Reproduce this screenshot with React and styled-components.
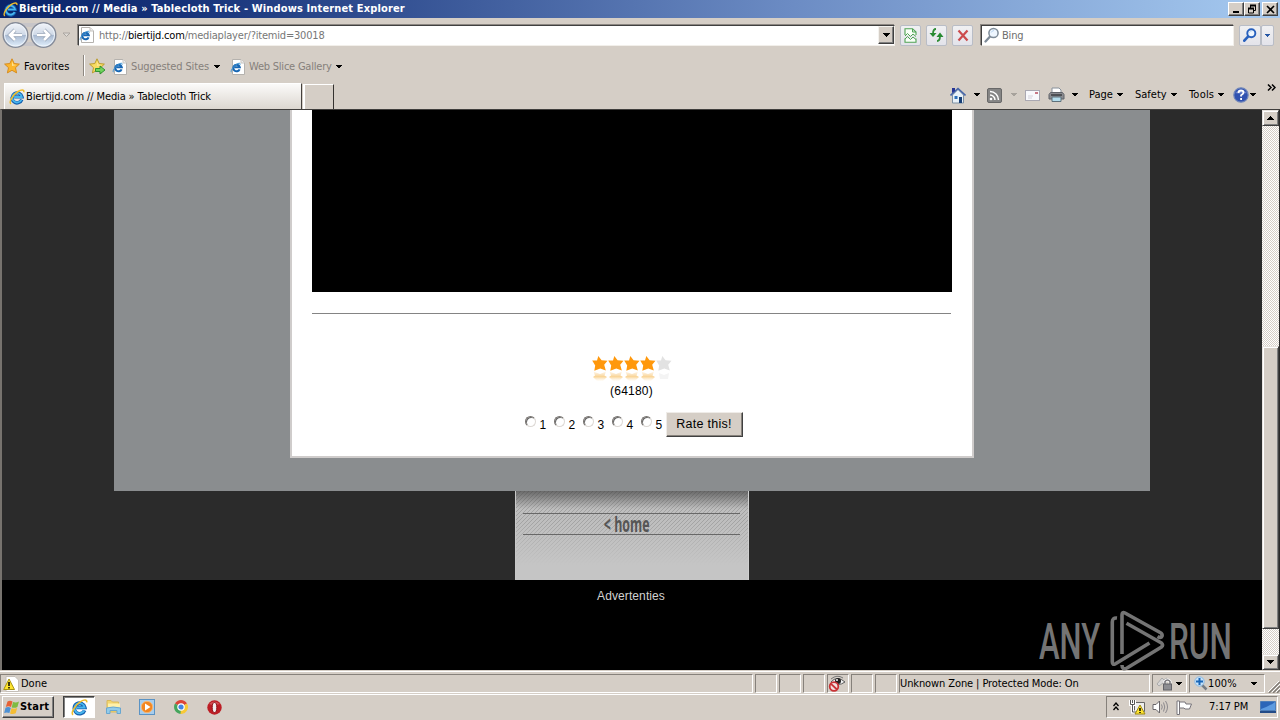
import React from "react";
import styled, { createGlobalStyle, css } from "styled-components";

const Global = createGlobalStyle`
  * { box-sizing: border-box; }
  html, body { margin: 0; height: 100%; overflow: hidden; }
  body { background: #d5cec6; }
  svg { display: block; flex: none; }
`;

const ui = css`
  font-family: "DejaVu Sans Condensed", "DejaVu Sans", sans-serif;
  font-stretch: condensed;
  font-size: 11px;
  line-height: 14px;
`;

const Window = styled.div`
  ${ui}
  width: 1280px;
  height: 720px;
  display: flex;
  flex-direction: column;
  background: #d5cec6;
  color: #000;
  overflow: hidden;
`;

const Text = styled.span`
  display: block;
  flex: none;
  width: ${(p) => p.$w}px;
  margin-left: ${(p) => p.$ml || 0}px;
  margin-top: ${(p) => p.$mt || 0}px;
  letter-spacing: ${(p) => p.$ls || 0}px;
  color: ${(p) => p.$color || "inherit"};
  font-weight: ${(p) => (p.$bold ? 700 : 400)};
  white-space: nowrap;
`;

const Host = styled.span`
  color: #000;
`;

const Slot = styled.span`
  display: block;
  flex: none;
  margin-left: ${(p) => p.$ml || 0}px;
  margin-top: ${(p) => p.$mt || 0}px;
`;

const TitleBar = styled.header`
  height: 18px;
  flex: none;
  display: flex;
  align-items: center;
  padding: 0 2px 0 3px;
  color: #fff;
  background: linear-gradient(90deg, #0a246a 0%, #17337a 15%, #6c8cc4 62%, #a6caf0 100%);
`;

const Spacer = styled.div`
  flex: 1;
`;

const Caption = styled.div`
  width: 16px;
  height: 14px;
  margin-left: ${(p) => p.$ml || 0}px;
  background: #d5cec6;
  border: 1px solid;
  border-color: #fff #404040 #404040 #fff;
  box-shadow: inset -1px -1px #808080;
  display: flex;
  align-items: center;
  justify-content: center;
`;

const NavBar = styled.nav`
  height: 34px;
  flex: none;
  display: flex;
  align-items: center;
  padding-left: 2px;
`;

const Field = styled.div`
  display: flex;
  align-items: center;
  width: ${(p) => p.$w}px;
  margin-left: ${(p) => p.$ml}px;
  height: 21px;
  background: #fff;
  border: 1px solid;
  border-color: #404040 #f2efea #f2efea #404040;
  box-shadow: -1px -1px #8c8782;
  padding-left: ${(p) => p.$pl || 0}px;
`;

const DropButton = styled.div`
  width: 16px;
  height: 18px;
  background: #d5cec6;
  border: 1px solid;
  border-color: #f4f2ee #404040 #404040 #f4f2ee;
  box-shadow: inset -1px -1px #808080;
  display: flex;
  align-items: center;
  justify-content: center;
`;

const Tool = styled.div`
  width: ${(p) => p.$w || 21}px;
  height: 21px;
  margin-left: ${(p) => p.$ml || 0}px;
  border: 1px solid #b9bdc6;
  border-radius: 2px;
  background: linear-gradient(#f0f0f2, #e3e3ea);
  display: flex;
  align-items: center;
  justify-content: center;
`;

const FavBar = styled.div`
  height: 29px;
  flex: none;
  display: flex;
  align-items: center;
  padding-left: 4px;
`;

const Divider = styled.i`
  width: 2px;
  height: 21px;
  margin: 0 4px 3px 10px;
  border-left: 1px solid #8d8780;
  border-right: 1px solid #fff;
`;

const TabBar = styled.div`
  height: 28px;
  flex: none;
  display: flex;
  padding-left: 4px;
`;

const Tab = styled.div`
  width: 298px;
  height: 26px;
  margin-top: 2px;
  padding-left: 4px;
  display: flex;
  align-items: center;
  background: linear-gradient(#fbfaf9, #dcd7d0);
  border-top: 1px solid #fff;
  border-left: 1px solid #fff;
  border-right: 1px solid #45413d;
`;

const NewTab = styled.div`
  width: 31px;
  height: 25px;
  margin: 3px 0 0 1px;
  border: 1px solid #fff;
  border-width: 1px 1px 0 2px;
  border-right-color: #35322f;
`;

const CommandBar = styled.div`
  flex: 1;
  display: flex;
  align-items: center;
  padding-left: 616px;
`;

const Viewport = styled.main`
  height: 561px;
  flex: none;
  display: flex;
  border-top: 1px solid #403e3c;
  border-left: 2px solid #77736e;
  background: #2b2b2b;
`;

const Site = styled.div`
  width: 1260px;
  display: flex;
  flex-direction: column;
  align-items: center;
  position: relative;
  font-family: "Liberation Sans", Arial, sans-serif;
  font-size: 12px;
`;

const Panel = styled.section`
  width: 1036px;
  height: 381px;
  background: #8a8d8f;
  display: flex;
  justify-content: center;
  align-items: flex-start;
`;

const Sheet = styled.div`
  width: 684px;
  height: 348px;
  background: #fff;
  border: 2px solid #cfcccb;
  border-top: 0;
  display: flex;
  flex-direction: column;
  align-items: center;
`;

const Video = styled.div`
  width: 640px;
  height: 182px;
  background: #000;
`;

const Rule = styled.div`
  width: 639px;
  height: 1px;
  margin: 21px 1px 0 0;
  background: #848484;
`;

const Stars = styled.div`
  display: flex;
  margin-top: 41px;
`;

const Votes = styled.div`
  height: 16px;
  margin-right: 1px;
  line-height: 16px;
  letter-spacing: 0.2px;
`;

const RateForm = styled.form`
  display: flex;
  align-items: flex-start;
  margin-top: 12px;
  margin-left: 4px;
`;

const Choice = styled.label`
  display: flex;
  width: 29px;
  line-height: 28px;
`;

const Radio = styled.i`
  width: 11px;
  height: 11px;
  margin: 5px 4px 0 0;
  border-radius: 50%;
  border: 1px solid;
  border-color: #77736f #dcd8d4 #dcd8d4 #77736f;
  box-shadow: inset 1px 1px #6a6a6a;
`;

const RateButton = styled.span`
  width: 77px;
  height: 25px;
  margin: 1px 1px 0 -4px;
  background: #d5cec6;
  border: 1px solid;
  border-color: #efece8 #404040 #404040 #efece8;
  box-shadow: inset -1px -1px #87827c;
  text-align: center;
  font-size: 12.5px;
  line-height: 23px;
  letter-spacing: 0.25px;
`;

const HomeCard = styled.div`
  width: 234px;
  height: 89px;
  padding: 22px 8px 0 7px;
  border-left: 1px solid #c8c8c8;
  border-right: 1px solid #d0d0d0;
  background:
    linear-gradient(rgba(60, 60, 60, 0.65), rgba(90, 90, 90, 0) 18px),
    linear-gradient(rgba(198, 198, 198, 0) 30px, #c5c5c5 74px),
    repeating-linear-gradient(135deg, #a2a2a2 0 1px, #bebebe 1px 2.83px);
`;

const HomeLink = styled.div`
  height: 22px;
  border-top: 1px solid #686868;
  border-bottom: 1px solid #686868;
  display: flex;
  justify-content: center;
  padding-right: 9px;
`;

const HomeText = styled.span`
  display: block;
  flex: none;
  font: 700 21px/21px "Open Sans", sans-serif;
  color: #555;
  white-space: nowrap;
  transform: scaleX(0.59);
`;

const Ads = styled.footer`
  width: 1260px;
  flex: 1;
  background: #000;
  color: #d2d2d2;
  text-align: center;
  padding: 9px 2px 0 0;
  letter-spacing: 0.1px;
`;

const Watermark = styled.div`
  position: absolute;
  left: 1037px;
  bottom: -1px;
  height: 61px;
  display: flex;
  align-items: center;
  color: #747474;
`;

const Brand = styled.span`
  width: ${(p) => p.$w}px;
  margin-left: ${(p) => p.$ml || 0}px;
  font: 500 50px/60px Roboto, sans-serif;
  padding-top: 3px;
  white-space: nowrap;
  transform-origin: 0 50%;
  transform: scaleX(${(p) => p.$sx});
`;

const Scrollbar = styled.div`
  width: 17px;
  display: flex;
  flex-direction: column;
  background: repeating-conic-gradient(#fff 0 25%, #d5cec6 0 50%) 0 0 / 2px 2px;
`;

const ScrollPart = styled.div`
  height: ${(p) => p.$h}px;
  margin-top: ${(p) => p.$mt || 0}px;
  flex: none;
  background: #d5cec6;
  border: 1px solid;
  border-color: #e8e4df #404040 #404040 #e8e4df;
  box-shadow: inset 1px 1px #fff, inset -1px -1px #808080;
  display: flex;
  align-items: center;
  justify-content: center;
`;

const StatusBar = styled.div`
  height: 24px;
  flex: none;
  display: flex;
  align-items: center;
  border-top: 1px solid #d5cec6;
  box-shadow: inset 0 1px #fff;
  padding-top: 2px;
`;

const Pane = styled.div`
  width: ${(p) => p.$w}px;
  height: 19px;
  flex: none;
  margin-right: 2px;
  padding-left: ${(p) => p.$pl || 0}px;
  display: flex;
  align-items: center;
  border: 1px solid;
  border-color: #86817b #fff #fff #86817b;
`;

const TaskBar = styled.footer`
  height: 26px;
  flex: none;
  display: flex;
  align-items: center;
  border-top: 1px solid #fff;
  padding: 0 2px 1px;
`;

const Start = styled.div`
  width: 52px;
  height: 22px;
  display: flex;
  align-items: center;
  padding-left: 1px;
  border: 1px solid;
  border-color: #fff #404040 #404040 #fff;
  box-shadow: inset -1px -1px #808080;
`;

const ActiveTask = styled.div`
  width: 32px;
  height: 22px;
  margin-left: 9px;
  padding-left: 7px;
  display: flex;
  align-items: center;
  background: #fff;
  border: 1px solid;
  border-color: #404040 #fff #fff #404040;
  box-shadow: inset 1px 1px #808080;
`;

const Tray = styled.div`
  width: 172px;
  height: 22px;
  display: flex;
  align-items: center;
  border: 1px solid;
  border-color: #86817b #fff #fff #86817b;
`;

const Arrow = ({ color = "#000", up = false, w = 5 }) => (
  <svg width={w} height={(w + 1) / 2} viewBox="0 0 6 3" preserveAspectRatio="none">
    <path d={up ? "M0 3L3 0L6 3Z" : "M0 0H6L3 3Z"} fill={color} shapeRendering="crispEdges" />
  </svg>
);

const IEMark = ({ size = 16 }) => (
  <svg width={size} height={size} viewBox="0 0 16 16">
    <path d="M12.8 10.6A5 5 0 1 1 13 7.9H5.2" fill="none" stroke="#155fae" strokeWidth="3.4" />
    <path d="M12.4 10.8A4.8 4.8 0 1 1 12.8 8H5.2" fill="none" stroke="#48b6ee" strokeWidth="1.8" />
    <path d="M2 14.8C-.8 13 4.500 5.300 9 2.500C12 .6 15.500 .2 14.700 3.200" fill="none" stroke="#f0bd2c" strokeWidth="1.5" />
  </svg>
);

const PageIE = () => (
  <svg width="16" height="16" viewBox="0 0 16 16">
    <path d="M2.500 .5H11L14.500 4V15.500H2.500Z" fill="#fff" stroke="#b5b2ae" />
    <path d="M11 .5V4H14.500" fill="#eee" stroke="#c5c2be" />
    <path d="M9.600 10.300A3.300 3.300 0 1 1 9.800 8.300H4.500" fill="none" stroke="#1767b4" strokeWidth="2" />
    <path d="M1.500 13.200C-.2 11.500 5 5.500 8 4.500C10 3.800 10.600 4.500 10 5.800" fill="none" stroke="#4096d4" />
  </svg>
);

const starPath = "M8 .8L10.200 5.500L15.400 6.100L11.500 9.700L12.600 14.900L8 12.300L3.400 14.900L4.500 9.700L.6 6.100L5.800 5.500Z";

const FavStar = ({ add = false }) => (
  <svg width="17" height="17" viewBox="0 0 17 17">
    <path d={starPath} fill={add ? "#f7dc62" : "#fcb62d"} stroke={add ? "#b59624" : "#d48717"} strokeWidth=".9" />
    <path d="M8 3L9.300 6.500L12.600 7L8 8Z" fill="#ffe393" />
    {add && <path d="M6.500 10.500H11V8L16 12L11 16V13.500H6.500Z" fill="#71d35c" stroke="#258c2b" strokeWidth=".9" />}
  </svg>
);

const RatingStar = ({ on }) => (
  <svg width="16" height="28" viewBox="0 0 16 28">
    <defs>
      <linearGradient id="reflection" x1="0" y1="0" x2="0" y2="1">
        <stop offset="0" stopColor="#f5b85c" stopOpacity=".1" />
        <stop offset=".55" stopColor="#f5b850" stopOpacity=".6" />
        <stop offset="1" stopColor="#ffe6bd" stopOpacity=".1" />
      </linearGradient>
    </defs>
    <path d="M6.300 1L9.600 5.200L15.500 5.700L12.200 9.800L13.800 15.500L8.300 13.400L2.300 15.800L3.200 10.600L.2 5.600L5 5.500Z" fill={on ? "#ff980c" : "#e2e2e2"} />
    {on && <path d="M1.500 16.500L8 19L14 16.500L12.500 20.500L15 22L11 26H5L1 22L3 20.500Z" fill="url(#reflection)" />}
    {!on && <path d="M3 18L8 20L13 18L12 24H4Z" fill="#f4f4f4" />}
  </svg>
);

const NavCircles = () => (
  <svg width="56" height="28" viewBox="0 0 56 28">
    <defs>
      <linearGradient id="orb" x1="0" y1="0" x2="0" y2="1">
        <stop offset="0" stopColor="#f3f5f9" />
        <stop offset=".48" stopColor="#cfd9e7" />
        <stop offset=".52" stopColor="#a8b9d1" />
        <stop offset="1" stopColor="#e5f3ff" />
      </linearGradient>
    </defs>
    <path d="M13 2H42Q34 6 28 6Q21 6 13 2M18 25Q28 17 38 25Z" fill="#c7c5c8" />
    {[13.500, 41.500].map((x) => (
      <g key={x}>
        <circle cx={x} cy="14" r="12.300" fill="url(#orb)" stroke="#858b98" strokeWidth="1.400" />
        <circle cx={x} cy="14" r="11" fill="none" stroke="#eef4fb" />
      </g>
    ))}
    <path d="M20 14H8.500M13 9L8 14L13 19M35 14H46.500M42 9L47 14L42 19" fill="none" stroke="#92a0b4" strokeWidth="4" />
    <path d="M20 14H8.500M13 9L8 14L13 19M35 14H46.500M42 9L47 14L42 19" fill="none" stroke="#fff" strokeWidth="2.700" />
  </svg>
);

const DimArrow = () => (
  <svg width="9" height="6" viewBox="0 0 9 6">
    <path d="M1 1H8L4.500 4.500Z" fill="#dfdbd6" stroke="#aaa5a0" />
  </svg>
);

const Lens = ({ color = "#7e8b98", size = 16, fat = 1.5 }) => (
  <svg width={size} height={size} viewBox="0 0 16 16">
    <path d="M1.500 14.500L6.500 9" stroke={color} strokeWidth={fat + 0.8} strokeLinecap="round" />
    <circle cx="9.500" cy="6" r="4.600" fill="#eef6ff" stroke={color} strokeWidth={fat} />
    <path d="M7.200 5.500Q8 3.600 10 3.500" fill="none" stroke="#b9d5f1" />
  </svg>
);

const CompatIcon = () => (
  <svg width="13" height="15" viewBox="0 0 13 15">
    <path d="M1 7V.7H8.500L12 4V7M1 10.500V14.300H12V10.500" fill="#f8fff7" stroke="#4fa354" strokeWidth="1.100" />
    <path d="M1 8L3.500 5.500L6.500 8.500L9 6L12 8.500M1 11L3.500 8.500L6.500 11.500L9 9L12 11.500" fill="none" stroke="#4fa354" />
    <path d="M8.500 1V4H12" fill="none" stroke="#4fa354" />
  </svg>
);

const RefreshIcon = () => (
  <svg width="15" height="14" viewBox="0 0 15 14">
    <path d="M7 1Q4 1 4 6M8 13Q11 13 11 8" fill="none" stroke="#2f8d36" strokeWidth="1.800" />
    <path d="M.5 5H7.500L4 9ZM7.500 9L11 4.500L14.500 9Z" fill="#278a31" />
  </svg>
);

const StopIcon = () => (
  <svg width="12" height="13" viewBox="0 0 12 13">
    <path d="M1.500 1.500L10.500 11.500M10.500 1.500L1.500 11.500" stroke="#cc4b4d" strokeWidth="2.200" />
  </svg>
);

const HomeIcon = () => (
  <svg width="16" height="17" viewBox="0 0 16 17">
    <path d="M2.500 8L8 2.500L13.500 8V16H2.500Z" fill="#e8f1f8" stroke="#7e91a4" />
    <path d="M0.500 8.500L8 1.500L15.500 8.500" fill="none" stroke="#4565a8" strokeWidth="1.600" />
    <path d="M2 1H5V4L2 6Z" fill="#263594" />
    <path d="M4.500 9H7.500V12H4.500Z" fill="#2d70ba" />
    <path d="M9 10H12V16H9Z" fill="#173f76" />
  </svg>
);

const FeedIcon = () => (
  <svg width="15" height="15" viewBox="0 0 15 15">
    <rect x=".5" y=".5" width="14" height="14" rx="1.500" fill="#858585" stroke="#686868" />
    <circle cx="4" cy="11" r="1.300" fill="#fff" />
    <path d="M3 7A5 5 0 0 1 8 12M3 3.500A8.500 8.500 0 0 1 11.500 12" fill="none" stroke="#fff" strokeWidth="1.500" />
  </svg>
);

const MailIcon = () => (
  <svg width="15" height="11" viewBox="0 0 15 11">
    <rect x=".5" y=".5" width="14" height="10" fill="#f8f8fc" stroke="#aaa8b2" />
    <path d="M3 6H8M3 8H7" stroke="#d2d0da" />
    <rect x="10" y="2" width="3" height="2" fill="#c87886" />
  </svg>
);

const PrintIcon = () => (
  <svg width="17" height="16" viewBox="0 0 17 16">
    <path d="M4 6V1H11L13 3V6" fill="#fff" stroke="#87909a" />
    <path d="M2.500 5.500H14.500L16 7.500V12H1V7.500Z" fill="#8a8b90" stroke="#5f6268" />
    <path d="M3 8H14" stroke="#3a3c41" strokeWidth="1.500" />
    <path d="M4 10H13V14.500H4Z" fill="#b4ddec" stroke="#5f717b" />
  </svg>
);

const HelpIcon = () => (
  <svg width="16" height="16" viewBox="0 0 16 16">
    <circle cx="8" cy="8" r="7.200" fill="#3152b0" stroke="#7086ba" strokeWidth="1.200" />
    <path d="M2 6Q8 0 14 6Q8 7 2 6" fill="#8fa4e0" opacity=".6" />
    <path d="M5.500 6Q5.500 3.500 8 3.500Q10.500 3.500 10.500 5.600Q10.500 7 8.100 8.300V9.600M8.100 11V13" fill="none" stroke="#fff" strokeWidth="1.800" />
  </svg>
);

const ChevronsRight = () => (
  <svg width="9" height="7" viewBox="0 0 9 7">
    <path d="M1 .5L4 3.500L1 6.500M5 .5L8 3.500L5 6.500" fill="none" stroke="#000" strokeWidth="1.500" />
  </svg>
);

const PlayLogo = () => (
  <svg width="56" height="61" viewBox="0 0 56 61">
    <g fill="none" stroke="#747474" strokeWidth="3.600" strokeLinejoin="round" strokeLinecap="butt">
      <path d="M7 8Q2.300 7.500 2.300 12V52Q2.300 55.500 5.500 53.700L39.500 33" />
      <path d="M12 44V5Q12 1.300 15 3L51 23Q53 25 51.500 27Q50 28 47.500 26.500" />
      <path d="M16.500 13.300L51.500 33Q53.500 35 51.500 37L17 58Q12 60.500 12 55" />
    </g>
  </svg>
);

const AlertPage = () => (
  <svg width="16" height="16" viewBox="0 0 16 16">
    <path d="M3 .5H12L15.500 4V15.500H3Z" fill="#fff" stroke="#c5bfb8" />
    <path d="M6 3L11.500 13.500H.7Z" fill="#ffe52f" stroke="#a79310" />
    <path d="M6 6V10M6 11V12.500" stroke="#000" strokeWidth="1.500" />
  </svg>
);

const PrivacyIcon = () => (
  <svg width="18" height="17" viewBox="0 0 18 17">
    <path d="M3 7Q9 0 17 7Q10 12 3 7Z" fill="#f4f4f4" stroke="#5b5b5b" />
    <path d="M3 4Q9-1 15 3" fill="none" stroke="#777" />
    <circle cx="10" cy="6" r="3" fill="#222" /><circle cx="9" cy="5" r="1" fill="#fff" />
    <circle cx="6" cy="11.500" r="4.300" fill="#f2dedd" stroke="#c93235" strokeWidth="1.800" />
    <path d="M3 8.800L9 14.500" stroke="#c93235" strokeWidth="1.800" />
  </svg>
);

const LockIcon = () => (
  <svg width="17" height="15" viewBox="0 0 17 15">
    <path d="M1 8L6 2L8 4L11 2L10 8L7 7L3 10Z" fill="#d8d6d6" stroke="#aaa" />
    <path d="M9 8V5.500Q11.500 2.500 14 5.500V8" fill="none" stroke="#fff" strokeWidth="3" />
    <path d="M9 8V5.500Q11.500 2.500 14 5.500V8" fill="none" stroke="#77757a" strokeWidth="1.500" />
    <rect x="7.500" y="8" width="8" height="6" fill="#8d8d92" stroke="#626268" />
  </svg>
);

const ZoomIcon = () => (
  <svg width="14" height="15" viewBox="0 0 14 15">
    <path d="M8 9L12.500 13.500" stroke="#777d85" strokeWidth="2.500" />
    <circle cx="5.500" cy="5.500" r="4.700" fill="#c7e2f9" stroke="#8ab9e3" />
    <path d="M5.500 2V9M2 5.500H9" stroke="#1966b8" strokeWidth="2" />
  </svg>
);

const GripIcon = () => (
  <svg width="12" height="12" viewBox="0 0 12 12">
    <path d="M1 12L12 1M5 12L12 5M9 12L12 9" stroke="#817b75" strokeWidth="1.500" />
    <path d="M0 11L11 0M4 11L12 3M8 11L12 7" stroke="#fff" />
  </svg>
);

const WindowsFlag = () => (
  <svg width="16" height="15" viewBox="0 0 16 15">
    <path d="M3.500 1.500Q6 0 8.500 1.500L7 7Q4.500 5.500 1.800 7Z" fill="#e66135" />
    <path d="M9 2Q12 3 15 1.500L13.400 7Q10.500 8.500 7.700 7.400Z" fill="#7fbb42" />
    <path d="M1.500 7.700Q4.500 6.400 6.800 7.900L5.400 13Q2.800 11.800 .2 13Z" fill="#4d91d4" />
    <path d="M7.500 8.300Q10.500 9.300 13.200 8L11.700 13.200Q9 14.700 6 13.400Z" fill="#f4bd34" />
  </svg>
);

const ExplorerIcon = () => (
  <svg width="17" height="16" viewBox="0 0 17 16">
    <path d="M2 1.500H6L7.500 3H13.500V13H2Z" fill="#f3d66f" stroke="#d9b95c" />
    <path d="M3 4.500H15V9H3Z" fill="#fff1aa" />
    <path d="M1.500 9Q8 7 15.500 9V14.500H12V11.500H5V14.500H1.500Z" fill="#91cbea" stroke="#68a7d0" />
  </svg>
);

const MediaIcon = () => (
  <svg width="16" height="16" viewBox="0 0 16 16">
    <rect x=".5" y=".5" width="15" height="15" fill="#a8cdec" stroke="#5b93c4" />
    <circle cx="8" cy="8" r="5.700" fill="#f38620" stroke="#f6b774" />
    <path d="M6 4.500L11.500 8L6 11.500Z" fill="#fff" />
  </svg>
);

const ChromeIcon = () => (
  <svg width="14" height="14" viewBox="0 0 14 14">
    <path d="M7 7L1 3.500A7 7 0 0 1 13 3.500Z" fill="#dc4437" />
    <path d="M7 7L1 3.500A7 7 0 0 0 6.500 14L10 8.700Z" fill="#45a55c" />
    <path d="M7 7L13 3.500A7 7 0 0 1 6.500 14Z" fill="#f8c936" />
    <circle cx="7" cy="7" r="3.200" fill="#4384e4" stroke="#fff" strokeWidth="1.200" />
  </svg>
);

const OperaIcon = () => (
  <svg width="15" height="15" viewBox="0 0 15 15">
    <circle cx="7.500" cy="7.500" r="7.200" fill="#bd1d24" />
    <path d="M2 4Q7-1 13 4Q7 6 2 4" fill="#df7476" opacity=".6" />
    <ellipse cx="7.500" cy="7.500" rx="2.300" ry="5" fill="#f2eeee" stroke="#8d1017" />
  </svg>
);

const NetworkIcon = () => (
  <svg width="17" height="16" viewBox="0 0 17 16">
    <path d="M5.500 3.500H15.500V12.500H5.500Z" fill="#eee" stroke="#666" />
    <path d="M1.500 1V5.500H5.500V1M3.500 5.500V13H9M3.500 1V4" fill="none" stroke="#fff" strokeWidth="3" />
    <path d="M1.500 1V5.500H5.500V1M3.500 5.500V13H9M3.500 1V4" fill="none" stroke="#555" />
    <path d="M11 6L16 15H6Z" fill="#ffe42f" stroke="#9e8914" />
    <path d="M11 9V12M11 13V14" stroke="#000" strokeWidth="1.500" />
  </svg>
);

const SpeakerIcon = () => (
  <svg width="17" height="14" viewBox="0 0 17 14">
    <path d="M1 4.500H4L7.500 1V13L4 9.500H1Z" fill="#fff" stroke="#69666a" />
    <path d="M9.500 4.500Q11 7 9.500 9.500M11.500 2.500Q14 7 11.500 11.500M13.500 1Q17.500 7 13.500 13" fill="none" stroke="#8c898d" />
  </svg>
);

const FlagIcon = () => (
  <svg width="17" height="15" viewBox="0 0 17 15">
    <path d="M3.500 2H9L10 4H15.500L13.500 9H9L8 8H3.500Z" fill="#fff" stroke="#77747a" />
    <path d="M1 1H3.500V14.500H1Z" fill="#fff" stroke="#77747a" />
  </svg>
);

const DesktopIcon = () => (
  <svg width="16" height="12" viewBox="0 0 16 12">
    <path d="M.5 .5H15.500V9.500H.5Z" fill="#2c66b8" stroke="#4e7eb8" />
    <path d="M1 8Q10 5 15 1V9H1Z" fill="#5d9be0" />
    <path d="M0 11H16" stroke="#234b87" strokeWidth="2" />
  </svg>
);

export default function App() {
  return (
    <Window>
      <Global />
      <TitleBar>
        <IEMark size={15} />
        <Text $w={400} $ml={1} $bold $ls={0.14}>Biertijd.com // Media » Tablecloth Trick - Windows Internet Explorer</Text>
        <Spacer />
        <Caption><svg width="10" height="10"><path d="M2 8H8" stroke="#000" strokeWidth="2" /></svg></Caption>
        <Caption>
          <svg width="10" height="10"><path d="M3.500 4V1.500H8.500V6.500H6.500M1.500 4.500H6.500V9H1.500Z" fill="none" stroke="#000" /><path d="M3 1.500H9M1 4.500H7" stroke="#000" strokeWidth="2" /></svg>
        </Caption>
        <Caption $ml={2}><svg width="9" height="9"><path d="M1 1L8 8M8 1L1 8" stroke="#000" strokeWidth="1.600" /></svg></Caption>
      </TitleBar>

      <NavBar>
        <NavCircles />
        <Slot $ml={4}><DimArrow /></Slot>
        <Field $w={817} $ml={7}>
          <PageIE />
          <Text $w={225} $ml={4} $mt={2} $ls={-0.2} $color="#777">http://<Host>biertijd.com</Host>/mediaplayer/?itemid=30018</Text>
          <Spacer />
          <DropButton><Arrow w={7} /></DropButton>
        </Field>
        <Tool $ml={5}><CompatIcon /></Tool>
        <Tool $ml={5}><RefreshIcon /></Tool>
        <Tool $ml={5}><StopIcon /></Tool>
        <Field $w={253} $ml={8} $pl={2}>
          <Lens />
          <Text $w={40} $ml={2} $mt={2} $ls={-0.2} $color="#6d6d6d">Bing</Text>
        </Field>
        <Tool $ml={5} $w={22}><Lens color="#2860bd" size={14} fat={2.2} /></Tool>
        <Tool $w={13}><Arrow color="#2556a4" /></Tool>
      </NavBar>

      <FavBar>
        <FavStar />
        <Text $w={49} $ml={3} $ls={0.1}>Favorites</Text>
        <Divider />
        <FavStar add />
        <Slot $ml={6}><PageIE /></Slot>
        <Text $w={79} $ml={3} $mt={1} $ls={-0.13} $color="#85807b">Suggested Sites</Text>
        <Slot $ml={4}><Arrow w={6} /></Slot>
        <Slot $ml={10}><PageIE /></Slot>
        <Text $w={82} $ml={3} $mt={1} $ls={-0.22} $color="#85807b">Web Slice Gallery</Text>
        <Slot $ml={5}><Arrow w={6} /></Slot>
      </FavBar>

      <TabBar>
        <Tab>
          <IEMark />
          <Text $w={190} $ml={1} $ls={-0.13}>Biertijd.com // Media » Tablecloth Trick</Text>
        </Tab>
        <NewTab />
        <CommandBar>
          <HomeIcon />
          <Slot $ml={8}><Arrow w={6} /></Slot>
          <Slot $ml={7}><FeedIcon /></Slot>
          <Slot $ml={9}><Arrow color="#a7a29c" w={6} /></Slot>
          <Slot $ml={8}><MailIcon /></Slot>
          <Slot $ml={8}><PrintIcon /></Slot>
          <Slot $ml={7}><Arrow w={6} /></Slot>
          <Text $w={25} $ml={11}>Page</Text>
          <Slot $ml={3}><Arrow w={6} /></Slot>
          <Text $w={32} $ml={12}>Safety</Text>
          <Slot $ml={4}><Arrow w={6} /></Slot>
          <Text $w={26} $ml={12} $ls={0.2}>Tools</Text>
          <Slot $ml={3}><Arrow w={6} /></Slot>
          <Slot $ml={9}><HelpIcon /></Slot>
          <Slot $ml={1}><Arrow w={6} /></Slot>
          <Slot $ml={11} $mt={-16}><ChevronsRight /></Slot>
        </CommandBar>
      </TabBar>

      <Viewport>
        <Site>
          <Panel>
            <Sheet>
              <Video />
              <Rule />
              <Stars>
                {[1, 2, 3, 4, 5].map((n) => <RatingStar key={n} on={n < 5} />)}
              </Stars>
              <Votes>(64180)</Votes>
              <RateForm>
                {[1, 2, 3, 4, 5].map((n) => <Choice key={n}><Radio />{n}</Choice>)}
                <RateButton>Rate this!</RateButton>
              </RateForm>
            </Sheet>
          </Panel>
          <HomeCard>
            <HomeLink><HomeText>&lt; home</HomeText></HomeLink>
          </HomeCard>
          <Ads>Advertenties</Ads>
          <Watermark>
            <Brand $w={71} $sx={0.62}>ANY</Brand>
            <PlayLogo />
            <Brand $w={62} $ml={3} $sx={0.63}>RUN</Brand>
          </Watermark>
        </Site>
        <Scrollbar>
          <ScrollPart $h={16}><Arrow up w={7} /></ScrollPart>
          <ScrollPart $h={283} $mt={220} />
          <ScrollPart $h={16} $mt={25}><Arrow w={7} /></ScrollPart>
        </Scrollbar>
      </Viewport>

      <StatusBar>
        <Pane $w={753} $pl={2}><AlertPage /><Text $w={40} $ml={2}>Done</Text></Pane>
        {[0, 1, 2].map((n) => <Pane key={n} $w={22} />)}
        <Pane $w={22}><PrivacyIcon /></Pane>
        {[3, 4].map((n) => <Pane key={n} $w={22} />)}
        <Pane $w={251}><Text $w={190} $ls={-0.1}>Unknown Zone | Protected Mode: On</Text></Pane>
        <Pane $w={35} $pl={3}><LockIcon /><Slot $ml={3}><Arrow w={6} /></Slot></Pane>
        <Pane $w={76} $pl={4}><ZoomIcon /><Text $w={30} $ls={0.1}>100%</Text><Slot $ml={13}><Arrow w={6} /></Slot></Pane>
        <Slot $ml={1} $mt={6}><GripIcon /></Slot>
      </StatusBar>

      <TaskBar>
        <Start><WindowsFlag /><Text $w={31} $bold $ls={0.2}>Start</Text></Start>
        <ActiveTask><IEMark size={17} /></ActiveTask>
        <Slot $ml={10}><ExplorerIcon /></Slot>
        <Slot $ml={17}><MediaIcon /></Slot>
        <Slot $ml={19}><ChromeIcon /></Slot>
        <Slot $ml={19}><OperaIcon /></Slot>
        <Spacer />
        <Tray>
          <Slot $ml={6} $mt={-2}>
            <svg width="6" height="9"><path d="M.5 4L3 1L5.500 4M.5 8L3 5L5.500 8" fill="none" stroke="#000" strokeWidth="1.300" /></svg>
          </Slot>
          <Slot $ml={10}><NetworkIcon /></Slot>
          <Slot $ml={6}><SpeakerIcon /></Slot>
          <Slot $ml={7}><FlagIcon /></Slot>
          <Text $w={40} $ml={16} $ls={-0.1}>7:17 PM</Text>
          <Slot $ml={11}><DesktopIcon /></Slot>
        </Tray>
      </TaskBar>
    </Window>
  );
}
